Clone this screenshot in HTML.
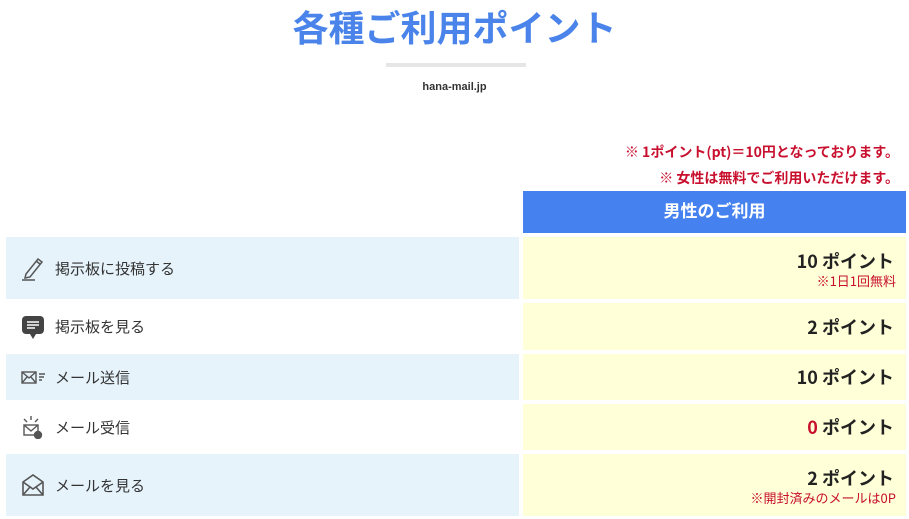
<!DOCTYPE html>
<html><head><meta charset="utf-8"><style>
body{margin:0;width:909px;height:519px;background:#fff;font-family:"Liberation Sans","Noto Sans CJK JP",sans-serif;position:relative;overflow:hidden}
.a{position:absolute}
.t{left:0;width:909px;text-align:center;top:6px;font-size:36px;font-weight:bold;color:#4a84ea;line-height:46px}
.bar{left:386px;top:63px;width:140px;height:4px;background:#e6e6e6}
.dom{left:0;width:909px;text-align:center;top:81px;font-size:11px;font-weight:bold;color:#333}
.n{right:10px;font-size:14px;font-weight:bold;color:#c8102e;text-align:right;font-family:"Noto Sans CJK JP",sans-serif;line-height:20px}
.hd{left:523px;top:191px;width:383px;height:42px;background:#4582ef;color:#fff;font-weight:bold;font-size:17px;text-align:center;line-height:42px}
.l{left:6px;width:513px;font-size:15px;color:#333;display:flex;align-items:center}
.l svg{margin-left:15px;margin-right:10px}
.r{left:523px;width:383px;background:#ffffd8;text-align:right;display:flex;flex-direction:column;justify-content:center;font-family:"Noto Sans CJK JP",sans-serif}
.p{font-size:18px;font-weight:bold;color:#222;padding-right:12px;line-height:24px}
.s{font-size:13px;color:#c8102e;padding-right:10px;line-height:15px}
.b{background:#e6f3fb}
</style></head><body>
<div class="a t">各種ご利用ポイント</div>
<div class="a bar"></div>
<div class="a dom">hana-mail.jp</div>
<div class="a n" style="top:142px">※ 1ポイント(pt)＝10円となっております。</div>
<div class="a n" style="top:168px">※ 女性は無料でご利用いただけます。</div>
<div class="a hd">男性のご利用</div>

<div class="a l b" style="top:237px;height:62px"><svg width="24" height="26" viewBox="0 0 24 26" fill="none" stroke="#555" stroke-width="1.5"><path d="M5 19 L17 4 L21 7 L9 22 L4 23 Z M15 6 L19 9"/><path d="M1 25 H14"/></svg>掲示板に投稿する</div>
<div class="a r" style="top:237px;height:62px"><div class="p">10 ポイント</div><div class="s">※1日1回無料</div></div>

<div class="a l" style="top:303px;height:47px"><svg width="24" height="26" viewBox="0 0 24 26"><rect x="1" y="2" width="22" height="18" rx="4" fill="#444"/><path d="M9 20 L12 25 L15 20Z" fill="#444"/><path d="M6 8H18M6 11H18M6 14H14" stroke="#fff" stroke-width="1.6"/></svg>掲示板を見る</div>
<div class="a r" style="top:303px;height:47px"><div class="p">2 ポイント</div></div>

<div class="a l b" style="top:354px;height:46px"><svg width="24" height="14" viewBox="0 0 24 14" fill="none" stroke="#555" stroke-width="1.4"><rect x="1" y="2" width="14" height="11"/><path d="M1 2 L8 8 L15 2 M1 13 L6 7 M15 13 L10 7"/><path d="M18 4H24M18 7H23M18 10H21"/></svg>メール送信</div>
<div class="a r" style="top:354px;height:46px"><div class="p">10 ポイント</div></div>

<div class="a l" style="top:404px;height:46px"><svg width="24" height="24" viewBox="0 0 24 24" fill="none" stroke="#555" stroke-width="1.4"><path d="M10 1V5M3 4L6 7M17 4L14 7"/><rect x="3" y="10" width="14" height="10"/><path d="M3 10L10 16L17 10"/><circle cx="17" cy="20" r="3.5" fill="#555"/></svg>メール受信</div>
<div class="a r" style="top:404px;height:46px"><div class="p"><span style="color:#c8102e">0</span> ポイント</div></div>

<div class="a l b" style="top:454px;height:62px"><svg width="24" height="22" viewBox="0 0 24 22" fill="none" stroke="#555" stroke-width="1.6"><path d="M2 8 L12 1 L22 8 V21 H2 Z"/><path d="M2 8 L12 15 L22 8 M2 21 L9 13 M22 21 L15 13"/></svg>メールを見る</div>
<div class="a r" style="top:454px;height:62px"><div class="p">2 ポイント</div><div class="s">※開封済みのメールは0P</div></div>
</body></html>
